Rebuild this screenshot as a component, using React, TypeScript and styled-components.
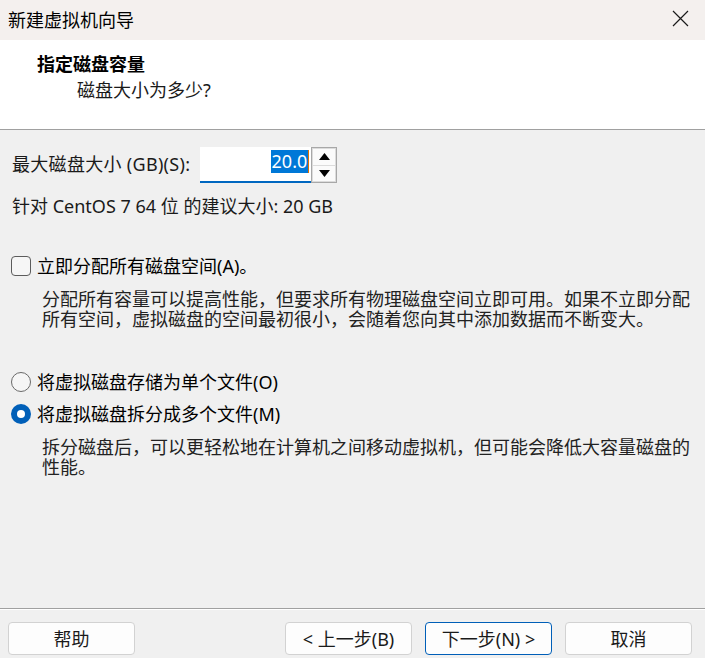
import styled, { createGlobalStyle, css } from "styled-components";

const GlobalStyle = createGlobalStyle`
	html, body {
		margin: 0;
		padding: 0;
		background: #f0f0f0;
	}
	* {
		box-sizing: border-box;
	}
`;

const FONT = `"Noto Sans", "Noto Sans CJK SC", sans-serif`;

const Window = styled.div`
	width: 705px;
	height: 658px;
	display: flex;
	flex-direction: column;
	font-family: ${FONT};
	font-size: 18px;
	color: #1a1a1a;
	background: #f0f0f0;
	overflow: hidden;
`;

const TitleBar = styled.div`
	height: 40px;
	display: flex;
	align-items: center;
	justify-content: space-between;
	padding: 0 0 3px 8px;
	background: #f4f0ee;
	color: #000;
`;

const CloseButton = styled.div`
	width: 46px;
	height: 36px;
	display: flex;
	align-items: center;
	justify-content: center;
	margin-right: 2px;
`;

const Header = styled.div`
	height: 90px;
	display: flex;
	flex-direction: column;
	padding: 12px 0 0 37px;
	background: #fff;
	border-bottom: 1px solid #a0a0a0;
`;

const HeaderTitle = styled.div`
	font-weight: 700;
	line-height: 24px;
	color: #000;
`;

const HeaderSub = styled.div`
	line-height: 24px;
	margin: 2px 0 0 40px;
`;

const Body = styled.div`
	flex: 1;
	display: flex;
	flex-direction: column;
	padding: 17px 12px 0 12px;
`;

const SizeRow = styled.div`
	display: flex;
	align-items: center;
	height: 36px;
`;

const Label = styled.span`
	line-height: 20px;
	margin-right: 10px;
	margin-top: -3px;
	letter-spacing: 0.3px;
`;

const SpinField = styled.div`
	width: 111px;
	height: 36px;
	display: flex;
	align-items: flex-start;
	justify-content: flex-end;
	padding: 3px 2px 0 0;
	background: #fff;
	border-bottom: 2px solid #0067c0;
`;

const Selected = styled.span`
	background: #0078d7;
	color: #fff;
	line-height: 23px;
	padding: 0 1px;
`;

const Caret = styled.span`
	width: 1px;
	height: 23px;
	background: #e07000;
`;

const Spinner = styled.div`
	width: 26px;
	height: 36px;
	display: flex;
	flex-direction: column;
	border: 1px solid #a8a8a8;
	background: #f0f0f0;
`;

const SpinButton = styled.div<{ $down?: boolean }>`
	flex: 1;
	display: flex;
	align-items: center;
	justify-content: center;
	background: #fbfbfb;
	border: 1px solid #dcdcdc;
	${(p) =>
		p.$down &&
		css`
			border-top: none;
		`}
`;

const Note = styled.div`
	line-height: 20px;
	margin-top: 13px;
`;

const OptionRow = styled.div<{ $gap: number }>`
	display: flex;
	align-items: center;
	gap: 6px;
	margin-top: ${(p) => p.$gap}px;
	margin-left: -1px;
`;

const CheckBox = styled.span`
	width: 20px;
	height: 20px;
	border: 1px solid #5c5c5c;
	border-radius: 4px;
	background: #f6f6f6;
`;

const Radio = styled.span<{ $checked?: boolean }>`
	width: 20px;
	height: 20px;
	border-radius: 50%;
	display: flex;
	align-items: center;
	justify-content: center;
	${(p) =>
		p.$checked
			? css`
					background: #005fb8;
					&::after {
						content: "";
						width: 8px;
						height: 8px;
						border-radius: 50%;
						background: #fff;
					}
			  `
			: css`
					border: 1px solid #6a6a6a;
					background: #f6f6f6;
			  `}
`;

const OptionText = styled.span`
	line-height: 20px;
	color: #000;
`;

const Description = styled.div`
	margin: 13px 0 0 30px;
	line-height: 20px;
	white-space: nowrap;
	color: #222;
`;

const Footer = styled.div`
	height: 50px;
	display: flex;
	gap: 13px;
	padding: 13px 13px 0 8px;
	border-top: 1px solid #a0a0a0;
	box-shadow: inset 0 1px 0 #fff;
`;

const Button = styled.div<{ $primary?: boolean }>`
	width: 127px;
	height: 33px;
	display: flex;
	align-items: center;
	justify-content: center;
	background: #fdfdfd;
	border: 1px solid ${(p) => (p.$primary ? "#005fb8" : "#d2d2d2")};
	border-radius: 4px;
	color: #1a1a1a;
	line-height: 20px;
`;

const Spacer = styled.div`
	flex: 1;
`;

function App() {
	return (
		<Window>
			<GlobalStyle />
			<TitleBar>
				<span>新建虚拟机向导</span>
				<CloseButton>
					<svg width="17" height="17" viewBox="0 0 17 17">
						<path d="M1 1 L16 16 M16 1 L1 16" stroke="#1a1a1a" strokeWidth="1.2" />
					</svg>
				</CloseButton>
			</TitleBar>
			<Header>
				<HeaderTitle>指定磁盘容量</HeaderTitle>
				<HeaderSub>磁盘大小为多少?</HeaderSub>
			</Header>
			<Body>
				<SizeRow>
					<Label>最大磁盘大小 (GB)(S):</Label>
					<SpinField>
						<Selected>20.0</Selected>
						<Caret />
					</SpinField>
					<Spinner>
						<SpinButton>
							<svg width="11" height="7" viewBox="0 0 11 7">
								<path d="M5.5 0 L11 7 L0 7 Z" fill="#000" />
							</svg>
						</SpinButton>
						<SpinButton $down>
							<svg width="11" height="7" viewBox="0 0 11 7">
								<path d="M0 0 L11 0 L5.5 7 Z" fill="#000" />
							</svg>
						</SpinButton>
					</Spinner>
				</SizeRow>
				<Note>针对 CentOS 7 64 位 的建议大小: 20 GB</Note>

				<OptionRow $gap={40}>
					<CheckBox />
					<OptionText>立即分配所有磁盘空间(A)。</OptionText>
				</OptionRow>
				<Description>
					分配所有容量可以提高性能，但要求所有物理磁盘空间立即可用。如果不立即分配
					<br />
					所有空间，虚拟磁盘的空间最初很小，会随着您向其中添加数据而不断变大。
				</Description>

				<OptionRow $gap={43}>
					<Radio />
					<OptionText>将虚拟磁盘存储为单个文件(O)</OptionText>
				</OptionRow>
				<OptionRow $gap={12}>
					<Radio $checked />
					<OptionText>将虚拟磁盘拆分成多个文件(M)</OptionText>
				</OptionRow>
				<Description>
					拆分磁盘后，可以更轻松地在计算机之间移动虚拟机，但可能会降低大容量磁盘的
					<br />
					性能。
				</Description>
			</Body>
			<Footer>
				<Button>帮助</Button>
				<Spacer />
				<Button>&lt; 上一步(B)</Button>
				<Button $primary>下一步(N) &gt;</Button>
				<Button>取消</Button>
			</Footer>
		</Window>
	);
}

export default App;
